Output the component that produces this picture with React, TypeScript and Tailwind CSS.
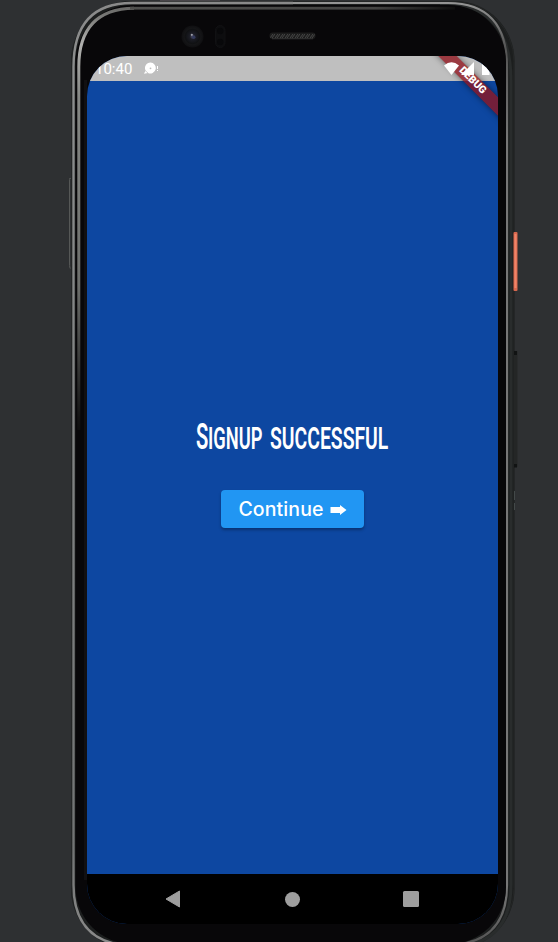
import React from "react";

function DeviceShell() {
  return (
    <svg className="absolute inset-0" width="558" height="942" viewBox="0 0 558 942" fill="none" aria-hidden="true">
      <defs>
        <linearGradient id="rimLeft" x1="0" y1="0" x2="0" y2="942" gradientUnits="userSpaceOnUse">
          <stop offset="0" stopColor="#8a8a8a" />
          <stop offset="0.08" stopColor="#8c8e8e" />
          <stop offset="0.9" stopColor="#727474" />
          <stop offset="1" stopColor="#8a8a8a" />
        </linearGradient>
        <linearGradient id="innerLeft" x1="0" y1="0" x2="0" y2="440" gradientUnits="userSpaceOnUse">
          <stop offset="0" stopColor="#5a5a58" />
          <stop offset="0.1" stopColor="#b0b0ae" />
          <stop offset="0.22" stopColor="#858784" />
          <stop offset="0.65" stopColor="#6c6e6b" />
          <stop offset="0.95" stopColor="#141414" />
          <stop offset="1" stopColor="#0b0a0b" />
        </linearGradient>
        <linearGradient id="topLine" x1="120" y1="0" x2="460" y2="0" gradientUnits="userSpaceOnUse">
          <stop offset="0" stopColor="#50504e" />
          <stop offset="0.75" stopColor="#444443" />
          <stop offset="1" stopColor="#0b0b0b" />
        </linearGradient>
        <linearGradient id="rimRight" x1="0" y1="0" x2="0" y2="942" gradientUnits="userSpaceOnUse">
          <stop offset="0" stopColor="#999" />
          <stop offset="0.05" stopColor="#555" />
          <stop offset="0.15" stopColor="#777" />
          <stop offset="0.94" stopColor="#777" />
          <stop offset="1" stopColor="#555" />
        </linearGradient>
        <radialGradient id="lens">
          <stop offset="0" stopColor="#53546b" />
          <stop offset="0.25" stopColor="#1c1d26" />
          <stop offset="0.65" stopColor="#101113" />
          <stop offset="0.75" stopColor="#151517" />
          <stop offset="1" stopColor="#0f0f11" />
        </radialGradient>
        <pattern id="mesh" width="5" height="6" patternUnits="userSpaceOnUse" x="270" y="33">
          <path d="M0 5L3 1M2 5L5 1" stroke="#4b4b4b" strokeWidth="0.9" />
        </pattern>
      </defs>
      <rect x="160" y="0" width="60" height="1" fill="#49464a" />
      <rect x="71" y="1" width="443.5" height="948" rx="60" fill="#1c1e1e" />
      <rect x="71.5" y="1.5" width="442.5" height="947" rx="60" stroke="#242626" />
      <path d="M440 3.500Q511 3 511 80V885Q511 946 450 947" stroke="#292c2c" strokeWidth="3" />
      <path d="M293 3H132Q73.500 3 73.500 67V885Q73.500 946 137 946H293" stroke="url(#rimLeft)" strokeWidth="2.400" />
      <path d="M293 3H448Q507 3 507 67V885Q507 945 446 945H293" stroke="url(#rimRight)" strokeWidth="2.200" />
      <rect x="75.500" y="5" width="430.500" height="939" rx="57" fill="#080709" />
      <path d="M134 8.200Q78.800 9 78.800 67V430" stroke="url(#innerLeft)" strokeWidth="3" />
      <rect x="130" y="6.800" width="325" height="2.800" fill="url(#topLine)" />
      <rect x="84" y="80" width="3" height="800" fill="#111012" />
      <path d="M70.500 179Q69.500 176 69.500 182V262Q69.500 270 70.500 268" stroke="#565857" />
      <rect x="513.500" y="232" width="4" height="59" rx="1" fill="#d9684f" />
      <rect x="514.500" y="234" width="2" height="54" fill="#f28468" />
      <rect x="514" y="351" width="3.500" height="116" rx="1" fill="#242626" />
      <rect x="514" y="351" width="3" height="4" fill="#111313" />
      <rect x="514" y="464" width="3" height="3.500" fill="#111313" />
      <path d="M514.500 491V500M514.500 503V510" stroke="#434949" />
      <circle cx="192.500" cy="36.500" r="11" fill="url(#lens)" />
      <circle cx="191.800" cy="34.800" r="1.100" fill="#9c9eab" />
      <circle cx="193.700" cy="37.200" r="1.800" fill="#343a5c" />
      <rect x="215.500" y="25.500" width="9.500" height="22" rx="4.700" fill="#0d0d0f" stroke="#111113" />
      <circle cx="220.200" cy="31" r="3.200" fill="#08080a" />
      <circle cx="220.200" cy="42" r="3.200" fill="#08080a" />
      <rect x="269.500" y="32.500" width="46" height="6.500" rx="3" fill="#1c1c1c" />
      <rect x="270" y="33" width="45" height="6" rx="3" fill="url(#mesh)" />
      <path d="M272 38.800H313" stroke="#454545" strokeWidth="0.600" />
    </svg>
  );
}

function ChatIcon() {
  return (
    <svg className="ml-[12px]" width="15" height="13" viewBox="0 0 15 13" aria-hidden="true">
      <path d="M6.500 0.500A5.500 5.500 0 1 1 4 11L0 11.700L1.600 8.600A5.500 5.500 0 0 1 6.500 0.500Z" fill="#fff" />
      <circle cx="6.500" cy="6.300" r="0.900" fill="#bfbfbf" />
      <path d="M1.200 8.600L4 11" stroke="#bfbfbf" strokeWidth="0.700" />
      <path d="M13.500 4V7M13.500 8V9" stroke="#fff" />
    </svg>
  );
}

function StatusIcons() {
  return (
    <svg className="relative z-10" width="46" height="14" viewBox="0 0 46 14" fill="#fff" aria-hidden="true">
      <path d="M0 3.500Q7.500 -3 15 3.500L7.500 13Z" />
      <path d="M30 0V13H17Z" />
      <path d="M38 1H40V0H43V1H45.500V13H38Z" />
    </svg>
  );
}

function DebugBanner() {
  return (
    <div className="absolute -top-[4px] -right-[37px] flex h-[13px] w-[124px] translate-y-[23px] rotate-45 items-center justify-center bg-[rgba(145,20,30,0.78)] pr-[2px] font-['Roboto'] text-[10.500px] leading-none font-black text-white shadow-[0_0_6px_rgba(0,0,0,0.5)]">
      DEBUG
    </div>
  );
}

export default function App() {
  return (
    <div className="relative h-[942px] w-[558px] overflow-hidden bg-[#2e3032]">
      <DeviceShell />
      <main className="relative mt-[56px] ml-[87px] flex h-[868px] w-[411px] flex-col overflow-hidden rounded-[40px] bg-[#0d47a1]">
        <header className="flex h-[25px] shrink-0 items-center justify-between bg-[#bfbfbf] pr-[8px] pl-[8px]">
          <div className="flex items-center font-['Roboto'] text-[15px] leading-none text-white">
            <span className="mt-[2px]">10:40</span>
            <ChatIcon />
          </div>
          <StatusIcons />
        </header>
        <DebugBanner />
        <section className="flex flex-1 flex-col items-center pt-[341px]">
          <h1 className="flex h-[30px] w-[193px] items-baseline font-['Roboto'] leading-[30px] font-semibold whitespace-nowrap text-white">
            <span className="w-[12px] origin-left scale-x-[0.560] text-[36px]">S</span>
            <span className="w-[62px] origin-left scale-x-[0.590] text-[31px]">IGNUP</span>
            <span className="w-[119px] origin-left scale-x-[0.625] text-[31px]">SUCCESSFUL</span>
          </h1>
          <button className="mt-[38px] flex h-[38px] w-[143px] items-center justify-center gap-[6px] rounded-[4px] bg-[#2196f3] pt-px text-white shadow-[0_2px_3px_rgba(0,0,0,0.3)]">
            <span className="font-['Inter'] text-[19.500px] leading-none font-medium tracking-[0.100px]">Continue</span>
            <svg width="17" height="10" viewBox="0 0 17 10" fill="#fff" aria-hidden="true">
              <path d="M0.500 2H10V0L16.500 5L10 10V8H0.500Z" />
            </svg>
          </button>
        </section>
        <nav className="flex h-[50px] shrink-0 items-center bg-black pl-[78px]">
          <svg width="16" height="18" viewBox="0 0 16 18" aria-hidden="true">
            <path d="M14.500 1V17L1 9Z" fill="#9e9e9e" stroke="#9e9e9e" strokeLinejoin="round" />
          </svg>
          <span className="ml-[104px] size-[15px] rounded-full bg-[#9e9e9e]" />
          <span className="ml-[103px] size-[16px] rounded-[1.500px] bg-[#9e9e9e]" />
        </nav>
      </main>
    </div>
  );
}
